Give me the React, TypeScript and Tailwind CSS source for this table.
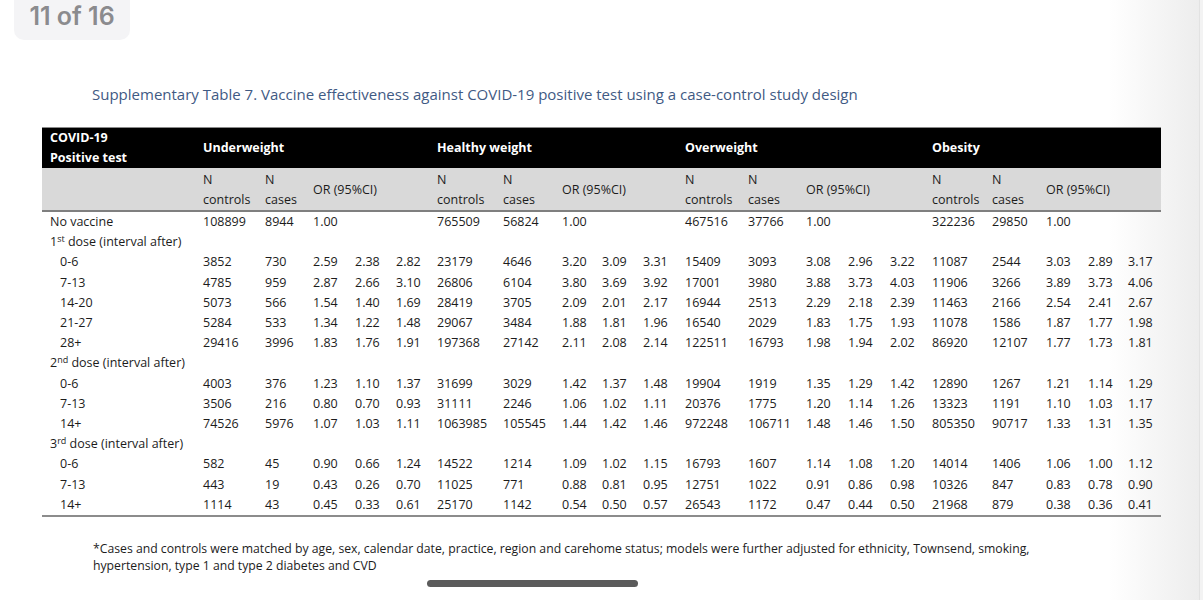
import React from "react";

type Group = [string, string, string, string, string];

interface Row {
  label: React.ReactNode;
  kind: "row" | "section";
  indent?: boolean;
  cells?: Group[];
}

const cols =
  "grid grid-cols-[161px_62px_48px_42px_41px_41px_66px_59px_40px_41px_42px_63px_58px_42px_42px_42px_60px_54px_42px_40px_33px]";

const g = (s: string): Group => s.split(" ") as Group;

const rows: Row[] = [
  {
    label: "No vaccine",
    kind: "row",
    cells: [g("108899 8944 1.00 _ _"), g("765509 56824 1.00 _ _"), g("467516 37766 1.00 _ _"), g("322236 29850 1.00 _ _")],
  },
  { label: <>1<sup className="text-[9px]">st</sup> dose (interval after)</>, kind: "section" },
  { label: "0-6", kind: "row", indent: true, cells: [g("3852 730 2.59 2.38 2.82"), g("23179 4646 3.20 3.09 3.31"), g("15409 3093 3.08 2.96 3.22"), g("11087 2544 3.03 2.89 3.17")] },
  { label: "7-13", kind: "row", indent: true, cells: [g("4785 959 2.87 2.66 3.10"), g("26806 6104 3.80 3.69 3.92"), g("17001 3980 3.88 3.73 4.03"), g("11906 3266 3.89 3.73 4.06")] },
  { label: "14-20", kind: "row", indent: true, cells: [g("5073 566 1.54 1.40 1.69"), g("28419 3705 2.09 2.01 2.17"), g("16944 2513 2.29 2.18 2.39"), g("11463 2166 2.54 2.41 2.67")] },
  { label: "21-27", kind: "row", indent: true, cells: [g("5284 533 1.34 1.22 1.48"), g("29067 3484 1.88 1.81 1.96"), g("16540 2029 1.83 1.75 1.93"), g("11078 1586 1.87 1.77 1.98")] },
  { label: "28+", kind: "row", indent: true, cells: [g("29416 3996 1.83 1.76 1.91"), g("197368 27142 2.11 2.08 2.14"), g("122511 16793 1.98 1.94 2.02"), g("86920 12107 1.77 1.73 1.81")] },
  { label: <>2<sup className="text-[9px]">nd</sup> dose (interval after)</>, kind: "section" },
  { label: "0-6", kind: "row", indent: true, cells: [g("4003 376 1.23 1.10 1.37"), g("31699 3029 1.42 1.37 1.48"), g("19904 1919 1.35 1.29 1.42"), g("12890 1267 1.21 1.14 1.29")] },
  { label: "7-13", kind: "row", indent: true, cells: [g("3506 216 0.80 0.70 0.93"), g("31111 2246 1.06 1.02 1.11"), g("20376 1775 1.20 1.14 1.26"), g("13323 1191 1.10 1.03 1.17")] },
  { label: "14+", kind: "row", indent: true, cells: [g("74526 5976 1.07 1.03 1.11"), g("1063985 105545 1.44 1.42 1.46"), g("972248 106711 1.48 1.46 1.50"), g("805350 90717 1.33 1.31 1.35")] },
  { label: <>3<sup className="text-[9px]">rd</sup> dose (interval after)</>, kind: "section" },
  { label: "0-6", kind: "row", indent: true, cells: [g("582 45 0.90 0.66 1.24"), g("14522 1214 1.09 1.02 1.15"), g("16793 1607 1.14 1.08 1.20"), g("14014 1406 1.06 1.00 1.12")] },
  { label: "7-13", kind: "row", indent: true, cells: [g("443 19 0.43 0.26 0.70"), g("11025 771 0.88 0.81 0.95"), g("12751 1022 0.91 0.86 0.98"), g("10326 847 0.83 0.78 0.90")] },
  { label: "14+", kind: "row", indent: true, cells: [g("1114 43 0.45 0.33 0.61"), g("25170 1142 0.54 0.50 0.57"), g("26543 1172 0.47 0.44 0.50"), g("21968 879 0.38 0.36 0.41")] },
];

const groups = ["Underweight", "Healthy weight", "Overweight", "Obesity"];

const TableHead = () => (
  <>
    <div className={`${cols} bg-black text-white font-bold leading-[20px] border-t border-[#8a8a8a]`}>
      <div className="pl-[8px]">
        <div>COVID-19</div>
        <div>Positive test</div>
      </div>
      {groups.map(name => (
        <div key={name} className="col-span-5 flex items-center">
          {name}
        </div>
      ))}
    </div>
    <div className={`${cols} bg-[#d9d9d9] leading-[20px] pt-[2px] border-b-2 border-[#7f7f7f]`}>
      <div />
      {groups.map(name => (
        <React.Fragment key={name}>
          <div>
            <div>N</div>
            <div>controls</div>
          </div>
          <div>
            <div>N</div>
            <div>cases</div>
          </div>
          <div className="col-span-3 flex items-center">OR (95%CI)</div>
        </React.Fragment>
      ))}
    </div>
  </>
);

export default function App() {
  return (
    <div className="relative w-[1203px] h-[600px] overflow-hidden bg-white font-['Open_Sans',sans-serif]">
      {/* page edge shading, sits behind the content */}
      <div className="absolute right-[4px] top-0 h-full w-[90px] bg-gradient-to-r from-transparent to-[#ededed]" />
      <div className="absolute right-0 top-0 h-full w-[4px] bg-[#f3f3f3] border-l border-[#e2e2e2]" />

      <div className="relative">
        <div className="ml-[14px] w-[116px] h-[40px] bg-[#f4f4f6] rounded-b-[10px] flex justify-center pt-[4px]">
          <span className="font-['Inter',sans-serif] font-semibold text-[25px] leading-[25px] text-[#8b8b8e]">
            11 of 16
          </span>
        </div>

        <div className="mt-[44px] pl-[92px] text-[15px] leading-[20px] text-[#3f5a84] whitespace-nowrap">
          Supplementary Table 7. Vaccine effectiveness against COVID-19 positive test using a case-control study design
        </div>

        <div className="mt-[23px] ml-[42px] w-[1119px] text-[12.5px] text-[#1c1c1c]">
          <TableHead />
          <div className="border-b-2 border-[#8c8c8c]">
            {rows.map((r, i) => (
              <div key={i} className={`${cols} h-[20.2px] items-center leading-[18px]`}>
                <div className={`${r.indent ? "pl-[18px]" : "pl-[8px]"} ${r.kind === "section" ? "col-span-21 whitespace-nowrap" : ""}`}>
                  {r.label}
                </div>
                {r.cells?.map((c, j) => (
                  <React.Fragment key={j}>
                    {c.map((v, k) => (
                      <div key={k}>{v === "_" ? "" : v}</div>
                    ))}
                  </React.Fragment>
                ))}
              </div>
            ))}
          </div>
        </div>

        <div className="mt-[23px] pl-[93px] text-[13px] leading-[17px] text-[#1c1c1c] whitespace-nowrap">
          <div className="origin-left scale-x-[0.94]">
            *Cases and controls were matched by age, sex, calendar date, practice, region and carehome status; models were further adjusted for ethnicity, Townsend, smoking,
          </div>
          <div className="origin-left scale-x-[0.94]">hypertension, type 1 and type 2 diabetes and CVD</div>
        </div>
      </div>

      <div className="absolute left-[427px] top-[580px] w-[211px] h-[7px] rounded-full bg-[#5b5b5b]" />
    </div>
  );
}
